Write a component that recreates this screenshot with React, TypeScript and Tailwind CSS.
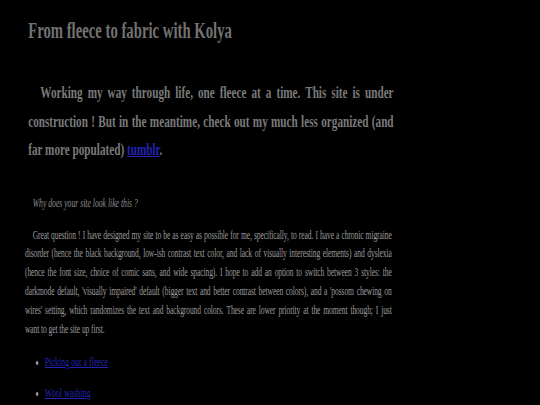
export default function App() {
  return (
    <div className="h-[405px] w-[540px] overflow-hidden bg-black">
      <div
        className="w-[844px] origin-top-left scale-x-[0.64] pt-[18px]"
        style={{ fontFamily: '"Liberation Serif", "Times New Roman", serif' }}
      >
        <div className="ml-[39px] w-[576px]">
          <h1 className="pl-[5px] text-[23px] font-bold leading-[26px] text-[#727272]">
            From fleece to fabric with Kolya
          </h1>

          <p className="mt-[34px] pl-[5px] text-justify indent-[19px] text-[17.5px] font-bold leading-[28.5px] text-[#7a7a7a]">
            Working my way through life, one fleece at a time. This site is under construction ! But in the
            meantime, check out my much less organized (and far more populated){" "}
            <a href="#" className="text-[#2323b4] underline">
              tumblr
            </a>
            .
          </p>

          <p className="mt-[30px] indent-[12px] text-[12px] italic leading-[18px] text-[#8c8c8c]">
            Why does your site look like this ?
          </p>

          <p className="mt-[14px] pr-[3px] text-justify indent-[12px] text-[11.8px] tracking-[-0.15px] leading-[18.9px] text-[#9a9a9a]">
            Great question ! I have designed my site to be as easy as possible for me, specifically, to read. I
            have a chronic migraine disorder (hence the black background, low-ish contrast text color, and lack of
            visually interesting elements) and dyslexia (hence the font size, choice of comic sans, and wide
            spacing). I hope to add an option to switch between 3 styles: the darkmode default, 'visually impaired'
            default (bigger text and better contrast between colors), and a 'possom chewing on wires' setting, which
            randomizes the text and background colors. These are lower priority at the moment though; I just
            want{"\u00a0"}to get the site up first.
          </p>

          <ul className="mt-[14px] flex list-disc flex-col gap-[13px] pl-[31px] text-[12.5px] leading-[18px] text-[#9a9a9a]">
            <li>
              <a href="#" className="text-[#2323b4] underline">
                Picking out a fleece
              </a>
            </li>
            <li>
              <a href="#" className="text-[#2323b4] underline">
                Wool washing
              </a>
            </li>
          </ul>
        </div>
      </div>
    </div>
  );
}
